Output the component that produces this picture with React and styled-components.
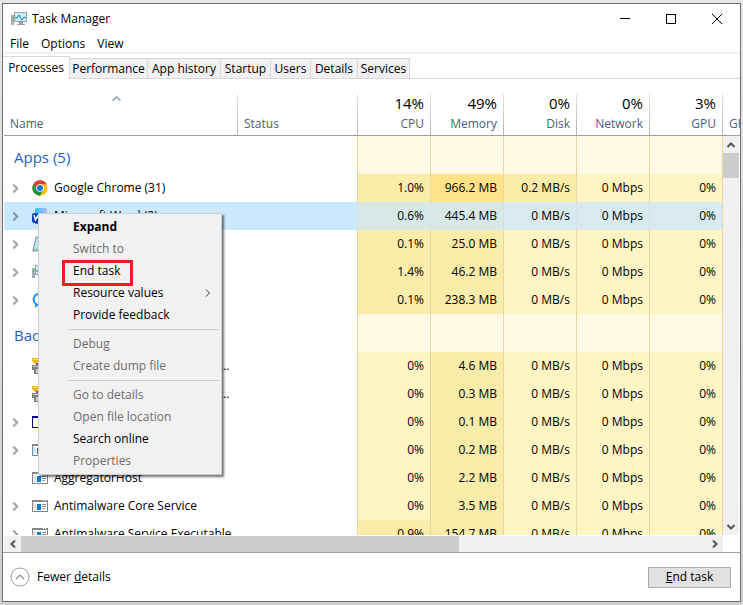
import styled, { createGlobalStyle, css } from "styled-components";

const GlobalStyle = createGlobalStyle`
    *,
    *::before,
    *::after {
        box-sizing: border-box;
    }

    body {
        margin: 0;
        background-color: #d9d9d9;
        font-family: "Segoe UI", "Open Sans", "Noto Sans", sans-serif;
        font-size: 12px;
        line-height: 16px;
        color: #000;
    }

    button {
        font: inherit;
        color: inherit;
        background: none;
        border: none;
        padding: 0;
        margin: 0;
    }
`;

const Desktop = styled.div`
    height: 100vh;
    padding: 3px 2px;
    background: linear-gradient(#e6e6e6, #cfcfcf);
`;

const Window = styled.main`
    position: relative;
    height: 100%;
    display: flex;
    flex-direction: column;
    background-color: #fff;
    border: 1px solid #6d6d6d;
`;

const TitleBar = styled.header`
    display: flex;
    align-items: center;
    gap: 5px;
    height: 30px;
    padding-left: 8px;
    flex-shrink: 0;
`;

const Title = styled.h1`
    flex: 1;
    margin: 0;
    font-size: 12px;
    font-weight: 400;
`;

const CaptionButton = styled.button`
    display: grid;
    place-items: center;
    width: 46px;
    height: 30px;
    margin-left: -5px;
`;

const MenuBar = styled.nav`
    display: flex;
    gap: 12px;
    height: 20px;
    padding: 2px 7px 0;
    border-bottom: 2px solid #f0f0f0;
    flex-shrink: 0;
`;

const Tabs = styled.div`
    display: flex;
    align-items: flex-end;
    height: 25px;
    border-bottom: 1px solid #d9d9d9;
    flex-shrink: 0;
`;

const Tab = styled.button`
    width: ${(props) => props.$width}px;
    height: 20px;
    background-color: #f0f0f0;
    border: 1px solid #d9d9d9;
    border-left: none;
    border-bottom: none;
    white-space: nowrap;

    ${(props) =>
        props.$active &&
        css`
            height: 23px;
            margin-bottom: -1px;
            background-color: #fff;
        `}
`;

const ListArea = styled.section`
    flex: 1;
    min-height: 0;
    display: grid;
    grid-template-columns: minmax(0, 1fr) 17px;
    grid-template-rows: 57px minmax(0, 1fr) 17px;
    padding-left: 1px;
    border-bottom: 1px solid #a0a0a0;
`;

const TableWrap = styled.div`
    grid-area: 1 / 1 / 3 / 3;
    overflow: hidden;
    padding-top: 15px;
`;

const Table = styled.table`
    width: 100%;
    table-layout: fixed;
    border-collapse: separate;
    border-spacing: 0;
`;

const NameCol = styled.col``;

const StatusCol = styled.col`
    width: 120px;
`;

const ValueCol = styled.col`
    width: 73px;
`;

const EdgeCol = styled.col`
    width: 18px;
`;

const HeadCell = styled.th`
    height: 42px;
    padding: ${(props) => (props.$first ? "0 14px 0 6px" : "0 6px 0 7px")};
    vertical-align: top;
    text-align: ${(props) => (props.$number ? "right" : "left")};
    font-weight: 400;
    color: #4c607a;
    white-space: nowrap;
    overflow: hidden;
    border-bottom: 1px solid #a0a0a0;
    background: ${(props) =>
        props.$first
            ? "none"
            : "linear-gradient(#e5e5e5, #b5b5b5) left / 1px 100% no-repeat"};
`;

const HeadValue = styled.div`
    height: 21px;
    font-size: 15px;
    line-height: 18px;
    color: #000;

    & svg {
        display: block;
        margin: 0 auto;
    }
`;

const HeadLabel = styled.div`
    line-height: 18px;
`;

const heat = {
    none: "#fff8e2",
    low: "#fff4c4",
    mid: "#f9eca8",
    high: "#ffe487",
};

const Row = styled.tr`
    height: ${(props) => (props.$group ? 38 : 28)}px;
    background-color: ${(props) => (props.$selected ? "#cce8ff" : "transparent")};
`;

const Cell = styled.td`
    padding: 0 6px;
    text-align: right;
    white-space: nowrap;
    border-left: 1px solid #e9d5a2;
    background-color: ${(props) => heat[props.$heat]};

    ${(props) =>
        props.$selected &&
        css`
            border-left-color: #dadfe6;
            background-color: ${props.$heat === "mid" ? "#d7e8e6" : "#d9eaef"};
        `}
`;

const EdgeCell = styled.td`
    padding: 0;
    border-left: 1px solid #e9d5a2;
    background-color: #fff;
`;

const NameCell = styled.td`
    padding: 0;
`;

const NameContent = styled.div`
    display: flex;
    align-items: center;
    padding-left: 7px;
    white-space: nowrap;
`;

const Expander = styled.button`
    display: grid;
    width: 9px;
    height: 16px;
    place-items: center;
    margin-right: 12px;
    visibility: ${(props) => (props.$hidden ? "hidden" : "visible")};
`;

const IconBox = styled.span`
    display: flex;
    width: 16px;
    margin-right: 6px;
`;

const GroupTitle = styled.th`
    padding: 4px 0 0 10px;
    text-align: left;
    font-size: 15px;
    font-weight: 400;
    line-height: 20px;
    color: #1e5fc8;
    white-space: nowrap;
`;

const ScrollBar = styled.div`
    display: flex;
    background-color: #f0f0f0;

    ${(props) =>
        props.$vertical
            ? css`
                  grid-area: 2 / 2;
                  flex-direction: column;
                  margin-right: 1px;
              `
            : css`
                  grid-area: 3 / 1;
                  margin-top: 1px;
              `}
`;

const ScrollButton = styled.button`
    display: grid;
    place-items: center;
    flex: 0 0 17px;
`;

const Track = styled.div`
    flex: 1;
    display: flex;
    flex-direction: inherit;
`;

const Thumb = styled.div`
    flex: 0 0 ${(props) => props.$size};
    background-color: #cdcdcd;
`;

const Footer = styled.footer`
    display: flex;
    align-items: center;
    justify-content: space-between;
    height: 48px;
    padding: 0 9px 0 7px;
    flex-shrink: 0;
`;

const DetailsToggle = styled.button`
    display: flex;
    align-items: center;
    gap: 7px;
`;

const EndTaskButton = styled.button`
    width: 83px;
    height: 21px;
    line-height: 18px;
    background-color: #e1e1e1;
    border: 1px solid #adadad;
`;

const ContextMenu = styled.div`
    position: absolute;
    top: 209px;
    left: 35px;
    width: 184px;
    padding: 2px;
    background-color: #f1f1f1;
    border: 1px solid #ccc;
    box-shadow: 2px 2px 2px rgba(0, 0, 0, 0.55);
`;

const MenuItem = styled.button`
    position: relative;
    display: flex;
    align-items: center;
    justify-content: space-between;
    width: 100%;
    height: 22px;
    padding: 0 7px 0 32px;
    font-weight: ${(props) => (props.$bold ? 700 : 400)};

    &:disabled {
        color: #6d6d6d;
    }
`;

const Separator = styled.hr`
    height: 1px;
    margin: 3px 0 3px 28px;
    border: none;
    background-color: #d0d0d0;
`;

const Highlight = styled.span`
    position: absolute;
    top: 0;
    left: 21px;
    width: 71px;
    height: 26px;
    border: 3px solid #ed1c24;
`;

function TaskManagerIcon() {
    return (
        <svg width="16" height="16" viewBox="0 0 16 16">
            <rect x="0" y="4" width="3" height="10" fill="#a9adb0" />
            <rect x="1" y="6" width="1" height="2" fill="#2ee02e" />
            <rect x="3.5" y="1.5" width="12" height="9" fill="#c9eefc" stroke="#9c9fa2" />
            <path d="M4 7h2l2-3 3 5 2-3 2 1" fill="none" stroke="#1f7fb5" />
            <path d="M8 11h4v3H8zM6 13h8v1H6z" fill="#9c9fa2" />
        </svg>
    );
}

function ChromeIcon() {
    return (
        <svg width="16" height="16" viewBox="0 0 48 48">
            <circle cx="24" cy="24" r="23" fill="#fbc116" />
            <path d="M4 12.500A23 23 0 0 0 24 47L34 29.700 24 24 14 29.700z" fill="#229342" />
            <path d="M4 12.500 14 29.700 24 13z" fill="#229342" />
            <path d="M4 12.500A23 23 0 0 1 44 12.500H24A11.500 11.500 0 0 0 13 21z" fill="#e33b2e" />
            <circle cx="24" cy="24" r="11.500" fill="#fff" />
            <circle cx="24" cy="24" r="9" fill="#1a73e8" />
        </svg>
    );
}

function WordIcon() {
    return (
        <svg width="16" height="16" viewBox="0 0 16 16">
            <defs>
                <linearGradient id="word-page">
                    <stop offset="0" stopColor="#27c4f5" />
                    <stop offset="1" stopColor="#b9b6f7" />
                </linearGradient>
            </defs>
            <rect x="3" y="0" width="12" height="16" rx="2" fill="url(#word-page)" />
            <path d="M3 7h12v7a2 2 0 0 1-2 2H3z" fill="#2b6fe0" />
            <rect x="0" y="5" width="11" height="10" rx="2" fill="#1145b3" />
            <path d="m2 7 1.500 5L5.500 8l2 4L9 7" fill="none" stroke="#fff" strokeWidth="1.300" />
        </svg>
    );
}

function NotepadIcon() {
    return (
        <svg width="16" height="16" viewBox="0 0 16 16">
            <path d="M4 1h11l-2 13H1z" fill="#a5dfe8" stroke="#7d9ba3" />
            <path d="M5 4h8M4 7h8M3 10h8" stroke="#e9fbfd" />
            <path d="M0 15h13" stroke="#8a8f92" />
        </svg>
    );
}

function PhoneLinkIcon() {
    return (
        <svg width="16" height="16" viewBox="0 0 16 16">
            <path
                d="M7 2a5.500 5.500 0 0 0-3 10v2l3-2h3a5 5 0 0 0 0-10z"
                fill="none"
                stroke="#1f8ff0"
                strokeWidth="2"
            />
        </svg>
    );
}

function UpdaterIcon() {
    return (
        <svg width="16" height="16" viewBox="0 0 16 16">
            <path d="M0 0h13v4l-3 2H3L0 3z" fill="#f2b70c" />
            <path d="M1 1h10v1H1z" fill="#ffe14a" />
            <path d="M4 5h6v3H4z" fill="#9b3fc4" />
            <path d="M0 7h14v4h-3v5H2v-4H0z" fill="#7f7f7f" />
            <path d="M1 8h11v1H1zM4 11h5v4H4z" fill="#cfcfcf" />
        </svg>
    );
}

function ConsoleIcon() {
    return (
        <svg width="16" height="16" viewBox="0 0 16 16">
            <rect x="0.500" y="2.500" width="15" height="11" fill="#fff" stroke="#00008b" />
            <path d="M0 3h16" stroke="#00008b" strokeWidth="2" />
        </svg>
    );
}

function ServiceIcon() {
    return (
        <svg width="16" height="16" viewBox="0 0 16 16" shapeRendering="crispEdges">
            <rect x="0" y="2" width="16" height="12" fill="#83878b" />
            <rect x="1" y="4" width="14" height="9" fill="#fff" />
            <path d="M11 3h1v-1h-1zM13 3h1v-1h-1z" fill="#fff" />
            <rect x="1" y="5" width="3" height="7" fill="#e3e3e3" />
            <rect x="5" y="6" width="4" height="6" fill="#0078d7" />
            <path d="M10 6h4v1h-4zM10 8h4v1h-4zM10 10h3v1h-3z" fill="#8f9397" />
        </svg>
    );
}

function Chevron({ direction = "right", color = "#a6a6a6", size = 8, stroke = 2 }) {
    const angles = { right: 0, down: 90, left: 180, up: 270 };
    return (
        <svg width={size} height={size} viewBox="0 0 8 8">
            <path
                d="M2 0.500 5.500 4 2 7.500"
                fill="none"
                stroke={color}
                strokeWidth={stroke}
                transform={`rotate(${angles[direction]} 4 4)`}
            />
        </svg>
    );
}

const tabs = [
    { label: "Processes", width: 67 },
    { label: "Performance", width: 78 },
    { label: "App history", width: 73 },
    { label: "Startup", width: 50 },
    { label: "Users", width: 40 },
    { label: "Details", width: 47 },
    { label: "Services", width: 52 },
];

const columns = [
    { label: "CPU", value: "14%" },
    { label: "Memory", value: "49%" },
    { label: "Disk", value: "0%" },
    { label: "Network", value: "0%" },
    { label: "GPU", value: "3%" },
];

const groups = [
    {
        title: "Apps (5)",
        rows: [
            {
                name: "Google Chrome (31)",
                icon: ChromeIcon,
                expandable: true,
                values: ["1.0%", "966.2 MB", "0.2 MB/s", "0 Mbps", "0%"],
                heats: ["mid", "high", "mid", "low", "low"],
            },
            {
                name: "Microsoft Word (2)",
                icon: WordIcon,
                expandable: true,
                selected: true,
                values: ["0.6%", "445.4 MB", "0 MB/s", "0 Mbps", "0%"],
                heats: ["mid", "mid", "low", "low", "low"],
            },
            {
                name: "Notepad",
                icon: NotepadIcon,
                expandable: true,
                values: ["0.1%", "25.0 MB", "0 MB/s", "0 Mbps", "0%"],
                heats: ["mid", "mid", "low", "low", "low"],
            },
            {
                name: "Task Manager",
                icon: TaskManagerIcon,
                expandable: true,
                values: ["1.4%", "46.2 MB", "0 MB/s", "0 Mbps", "0%"],
                heats: ["mid", "mid", "low", "low", "low"],
            },
            {
                name: "Phone Link",
                icon: PhoneLinkIcon,
                expandable: true,
                values: ["0.1%", "238.3 MB", "0 MB/s", "0 Mbps", "0%"],
                heats: ["mid", "mid", "low", "low", "low"],
            },
        ],
    },
    {
        title: "Background processes",
        rows: [
            {
                name: "Acrobat Updater Helpers (x32...",
                icon: UpdaterIcon,
                values: ["0%", "4.6 MB", "0 MB/s", "0 Mbps", "0%"],
                heats: ["low", "mid", "low", "low", "low"],
            },
            {
                name: "Acrobat Updater Helpers (x32...",
                icon: UpdaterIcon,
                values: ["0%", "0.3 MB", "0 MB/s", "0 Mbps", "0%"],
                heats: ["low", "mid", "low", "low", "low"],
            },
            {
                name: "Adobe Service",
                icon: ConsoleIcon,
                expandable: true,
                values: ["0%", "0.1 MB", "0 MB/s", "0 Mbps", "0%"],
                heats: ["low", "mid", "low", "low", "low"],
            },
            {
                name: "Agent Service",
                icon: ServiceIcon,
                expandable: true,
                values: ["0%", "0.2 MB", "0 MB/s", "0 Mbps", "0%"],
                heats: ["low", "mid", "low", "low", "low"],
            },
            {
                name: "AggregatorHost",
                icon: ServiceIcon,
                values: ["0%", "2.2 MB", "0 MB/s", "0 Mbps", "0%"],
                heats: ["low", "mid", "low", "low", "low"],
            },
            {
                name: "Antimalware Core Service",
                icon: ServiceIcon,
                expandable: true,
                values: ["0%", "3.5 MB", "0 MB/s", "0 Mbps", "0%"],
                heats: ["low", "mid", "low", "low", "low"],
            },
            {
                name: "Antimalware Service Executable",
                icon: ServiceIcon,
                expandable: true,
                values: ["0.9%", "154.7 MB", "0 MB/s", "0 Mbps", "0%"],
                heats: ["mid", "mid", "low", "low", "low"],
            },
        ],
    },
];

function ProcessRow({ process }) {
    const { name, icon: Icon, expandable, selected, values, heats } = process;
    return (
        <Row $selected={selected}>
            <NameCell>
                <NameContent>
                    <Expander $hidden={!expandable} aria-label={`Expand ${name}`}>
                        <Chevron size={9} color={selected ? "#8d98a3" : "#a6a6a6"} />
                    </Expander>
                    <IconBox>
                        <Icon />
                    </IconBox>
                    {name}
                </NameContent>
            </NameCell>
            <td />
            {values.map((value, i) => (
                <Cell key={columns[i].label} $heat={heats[i]} $selected={selected}>
                    {value}
                </Cell>
            ))}
            <EdgeCell />
        </Row>
    );
}

function ProcessTable() {
    return (
        <TableWrap>
            <Table>
                <colgroup>
                    <NameCol />
                    <StatusCol />
                    {columns.map((column) => (
                        <ValueCol key={column.label} />
                    ))}
                    <EdgeCol />
                </colgroup>
                <thead>
                    <tr>
                        <HeadCell $first>
                            <HeadValue>
                                <Chevron direction="up" color="#7d8da3" size={9} stroke={1} />
                            </HeadValue>
                            <HeadLabel>Name</HeadLabel>
                        </HeadCell>
                        <HeadCell>
                            <HeadValue />
                            <HeadLabel>Status</HeadLabel>
                        </HeadCell>
                        {columns.map((column) => (
                            <HeadCell key={column.label} $number>
                                <HeadValue>{column.value}</HeadValue>
                                <HeadLabel>{column.label}</HeadLabel>
                            </HeadCell>
                        ))}
                        <HeadCell>
                            <HeadValue />
                            <HeadLabel>GPU</HeadLabel>
                        </HeadCell>
                    </tr>
                </thead>
                {groups.map((group) => (
                    <tbody key={group.title}>
                        <Row $group>
                            <GroupTitle colSpan={2}>{group.title}</GroupTitle>
                            {columns.map((column) => (
                                <Cell key={column.label} $heat="none" />
                            ))}
                            <EdgeCell />
                        </Row>
                        {group.rows.map((process, i) => (
                            <ProcessRow key={i} process={process} />
                        ))}
                    </tbody>
                ))}
            </Table>
        </TableWrap>
    );
}

function Scroller({ vertical, size }) {
    return (
        <ScrollBar $vertical={vertical}>
            <ScrollButton aria-label={vertical ? "Scroll up" : "Scroll left"}>
                <Chevron direction={vertical ? "up" : "left"} color="#555" />
            </ScrollButton>
            <Track>
                <Thumb $size={size} />
            </Track>
            <ScrollButton aria-label={vertical ? "Scroll down" : "Scroll right"}>
                <Chevron direction={vertical ? "down" : "right"} color="#555" />
            </ScrollButton>
        </ScrollBar>
    );
}

function ProcessMenu() {
    return (
        <ContextMenu>
            <MenuItem $bold>Expand</MenuItem>
            <MenuItem disabled>Switch to</MenuItem>
            <MenuItem>
                End task
                <Highlight />
            </MenuItem>
            <MenuItem>
                Resource values
                <Chevron color="#333" stroke={1} />
            </MenuItem>
            <MenuItem>Provide feedback</MenuItem>
            <Separator />
            <MenuItem disabled>Debug</MenuItem>
            <MenuItem disabled>Create dump file</MenuItem>
            <Separator />
            <MenuItem disabled>Go to details</MenuItem>
            <MenuItem disabled>Open file location</MenuItem>
            <MenuItem>Search online</MenuItem>
            <MenuItem disabled>Properties</MenuItem>
        </ContextMenu>
    );
}

function App() {
    return (
        <Desktop>
            <GlobalStyle />
            <Window>
                <TitleBar>
                    <TaskManagerIcon />
                    <Title>Task Manager</Title>
                    <CaptionButton aria-label="Minimize">
                        <svg width="10" height="10" viewBox="0 0 10 10">
                            <path d="M0 4.500h10" stroke="#000" />
                        </svg>
                    </CaptionButton>
                    <CaptionButton aria-label="Maximize">
                        <svg width="10" height="10" viewBox="0 0 10 10">
                            <rect x="0.500" y="0.500" width="9" height="9" fill="none" stroke="#000" />
                        </svg>
                    </CaptionButton>
                    <CaptionButton aria-label="Close">
                        <svg width="10" height="10" viewBox="0 0 10 10">
                            <path d="m0 0 10 10M10 0 0 10" stroke="#000" />
                        </svg>
                    </CaptionButton>
                </TitleBar>
                <MenuBar>
                    <button>File</button>
                    <button>Options</button>
                    <button>View</button>
                </MenuBar>
                <Tabs role="tablist">
                    {tabs.map((tab, i) => (
                        <Tab
                            key={tab.label}
                            role="tab"
                            aria-selected={i === 0}
                            $active={i === 0}
                            $width={tab.width}
                        >
                            {tab.label}
                        </Tab>
                    ))}
                </Tabs>
                <ListArea>
                    <ProcessTable />
                    <Scroller vertical size="25px" />
                    <Scroller size="64%" />
                </ListArea>
                <Footer>
                    <DetailsToggle>
                        <svg width="20" height="20" viewBox="0 0 20 20">
                            <circle cx="10" cy="10" r="9" fill="none" stroke="#999" />
                            <path d="m6 12 4-4 4 4" fill="none" stroke="#999" strokeWidth="1.500" />
                        </svg>
                        <span>
                            Fewer <u>d</u>etails
                        </span>
                    </DetailsToggle>
                    <EndTaskButton>
                        <u>E</u>nd task
                    </EndTaskButton>
                </Footer>
                <ProcessMenu />
            </Window>
        </Desktop>
    );
}

export default App;
